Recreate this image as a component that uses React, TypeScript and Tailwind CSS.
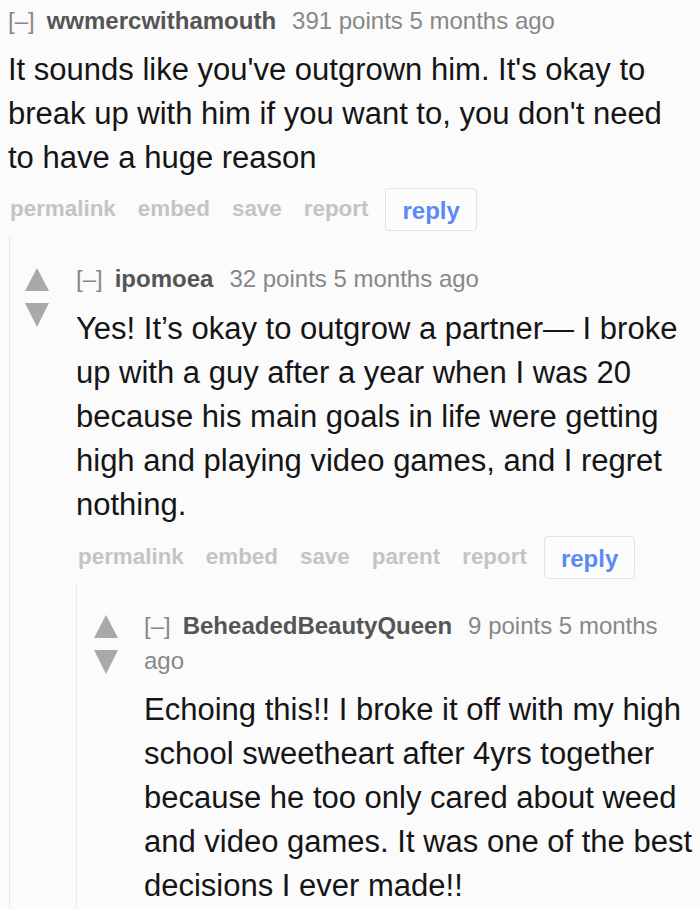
import React from "react";

const Arrows = () => (
  <div className="flex flex-col items-center w-[24px] shrink-0 pt-[7px]">
    <svg width="24" height="23" viewBox="0 0 24 23">
      <polygon points="12,0 24,23 0,23" fill="#a9a9a9" />
    </svg>
    <svg width="24" height="24" viewBox="0 0 24 24" className="mt-[12px]">
      <polygon points="0,0 24,0 12,24" fill="#a9a9a9" />
    </svg>
  </div>
);

const Header = ({ user, meta }: { user: string; meta: string }) => (
  <div className="text-[24px] leading-[35px] text-[#888]">
    <span className="text-[#888] mr-[12px]">[–]</span>
    <span className="font-bold text-[#555] mr-[16px]">{user}</span>
    {meta.split(" ").map((w, i, a) => (
      <React.Fragment key={i}>
        <span>{w}</span>
        {i < a.length - 1 ? " " : null}
      </React.Fragment>
    ))}
  </div>
);

const Buttons = ({ items }: { items: string[] }) => (
  <div className="flex items-center text-[22.4px] font-bold text-[#c4c4c4] leading-none pl-[2px]">
    {items.map((t) => (
      <span key={t} className="mr-[22px]">
        {t}
      </span>
    ))}
    <span className="-ml-[5px] flex items-center h-[43px] px-[16px] pt-[3px] border border-[#e4e4e4] rounded-[4px] bg-[#fcfcfc] text-[#5a8af2] text-[24px]">
      reply
    </span>
  </div>
);

export default function App() {
  return (
    <div className="w-[700px] h-[909px] overflow-hidden bg-[#fbfbfb] font-['Liberation_Sans',Arial,sans-serif]">
      <div className="pt-[3px]">
        <div className="pl-[8px]">
          <Header user="wwmercwithamouth" meta="391 points 5 months ago" />
          <p className="mt-[10px] text-[31px] leading-[44px] text-[#151515] pr-[16px]">
            It sounds like you've outgrown him. It's okay to break up with him if you want to, you don't need to have a huge reason
          </p>
          <div className="mt-[8px]">
            <Buttons items={["permalink", "embed", "save", "report"]} />
          </div>
        </div>

        <div className="ml-[9px] mt-[6px] border-l border-dotted border-[#d8d8d8] pl-[15px] pt-[24px] flex">
          <Arrows />
          <div className="ml-[27px] flex-1 min-w-0">
            <Header user="ipomoea" meta="32 points 5 months ago" />
            <p className="mt-[11px] text-[31px] leading-[44px] text-[#151515] pr-[8px]">
              Yes! It’s okay to outgrow a partner— I broke up with a guy after a year when I was 20 because his main goals in life were getting high and playing video games, and I regret nothing.
            </p>
            <div className="mt-[9px]">
              <Buttons items={["permalink", "embed", "save", "parent", "report"]} />
            </div>

            <div className="mt-[6px] border-l border-dotted border-[#d8d8d8] pl-[17px] pt-[23px] flex">
              <Arrows />
              <div className="ml-[26px] flex-1 min-w-0">
                <Header user="BeheadedBeautyQueen" meta="9 points 5 months ago" />
                <p className="mt-[10px] text-[31px] leading-[44px] text-[#151515]">
                  Echoing this!! I broke it off with my high school sweetheart after 4yrs together because he too only cared about weed and video games. It was one of the best decisions I ever made!!
                </p>
              </div>
            </div>
          </div>
        </div>
      </div>
    </div>
  );
}
